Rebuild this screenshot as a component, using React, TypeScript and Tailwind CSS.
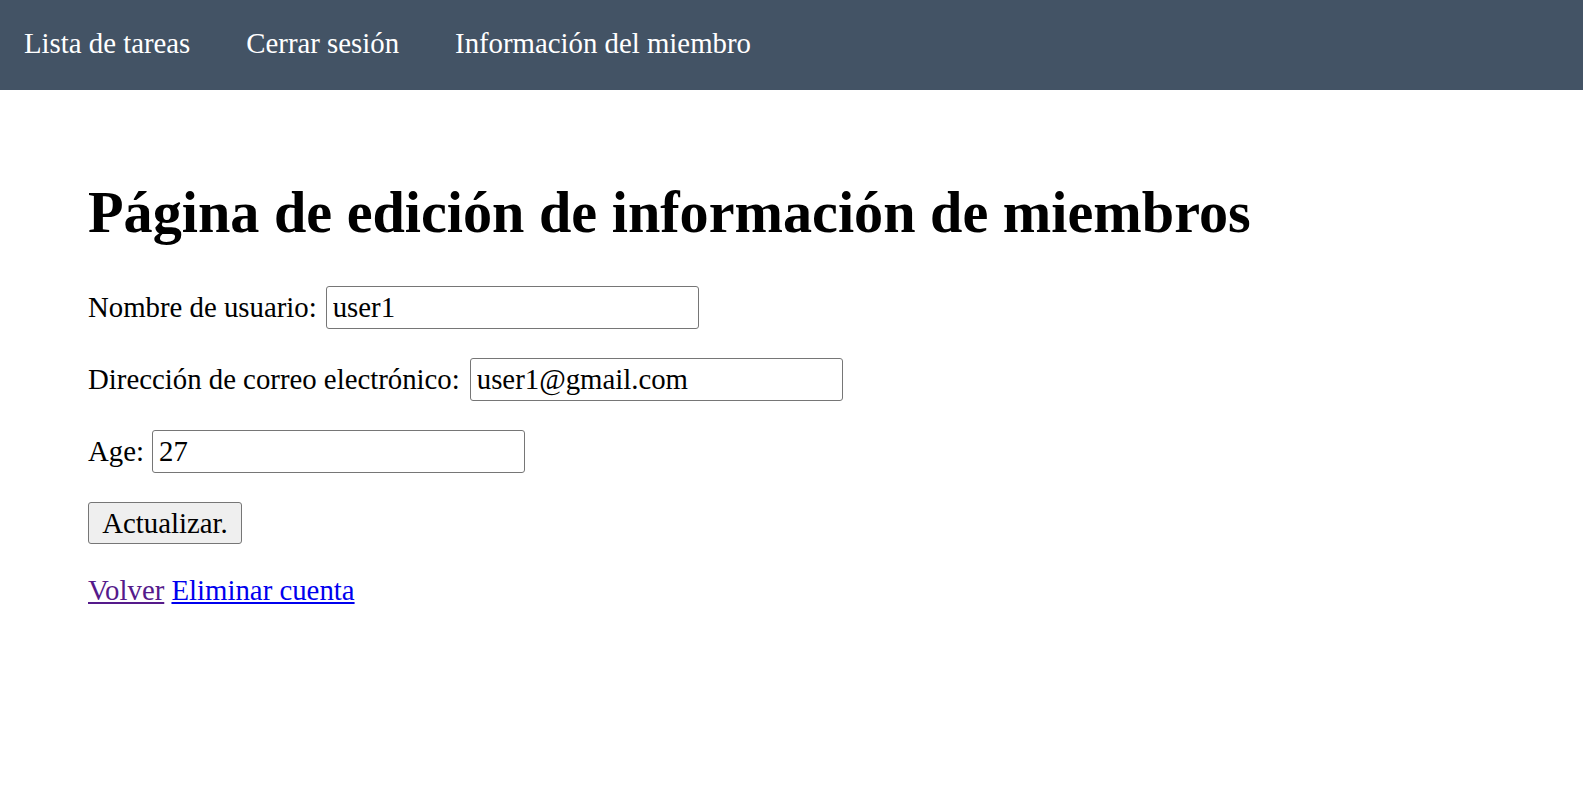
import { useState } from 'react';

export default function App() {
    const [username, setUsername] = useState('user1');
    const [email, setEmail] = useState('user1@gmail.com');
    const [age, setAge] = useState('27');

    const inputClass =
        'h-[43px] w-[373px] rounded-[3px] border border-[#767676] bg-white px-[6px] text-[28.8px] leading-[33px] text-black outline-none';

    return (
        <div className="min-h-screen bg-white font-['Liberation_Serif',serif] text-[28.8px] leading-[33px] text-black">
            {/* Top navigation */}
            <nav className="flex h-[90px] items-start gap-[56px] bg-[#435365] pl-[24px] pt-[27px] text-white">
                <a href="#" className="no-underline">Lista de tareas</a>
                <a href="#" className="no-underline">Cerrar sesión</a>
                <a href="#" className="no-underline">Información del miembro</a>
            </nav>

            <main className="pl-[88px]">
                <h1 className="mt-[90px] text-[58.2px] font-bold leading-[66px]">
                    Página de edición de información de miembros
                </h1>

                <form className="mt-[40px] flex flex-col items-start gap-[29px]" onSubmit={(e) => e.preventDefault()}>
                    <div className="flex h-[43px] items-center">
                        <label htmlFor="username" className="mr-[9px]">Nombre de usuario:</label>
                        <input id="username" className={inputClass} value={username} onChange={(e) => setUsername(e.target.value)} />
                    </div>
                    <div className="flex h-[43px] items-center">
                        <label htmlFor="email" className="mr-[10px]">Dirección de correo electrónico:</label>
                        <input id="email" className={inputClass} value={email} onChange={(e) => setEmail(e.target.value)} />
                    </div>
                    <div className="flex h-[43px] items-center">
                        <label htmlFor="age" className="mr-[8px]">Age:</label>
                        <input id="age" className={inputClass} value={age} onChange={(e) => setAge(e.target.value)} />
                    </div>
                    <button
                        type="submit"
                        className="h-[42px] w-[154px] rounded-[3px] border border-[#767676] bg-[#efefef] text-center text-[28.8px] leading-[33px] text-black"
                    >
                        Actualizar.
                    </button>
                </form>

                <div className="mt-[30px]">
                    <a href="#" className="text-[#551a8b] underline">Volver</a>{' '}
                    <a href="#" className="text-[#0000ee] underline">Eliminar cuenta</a>
                </div>
            </main>
        </div>
    );
}
